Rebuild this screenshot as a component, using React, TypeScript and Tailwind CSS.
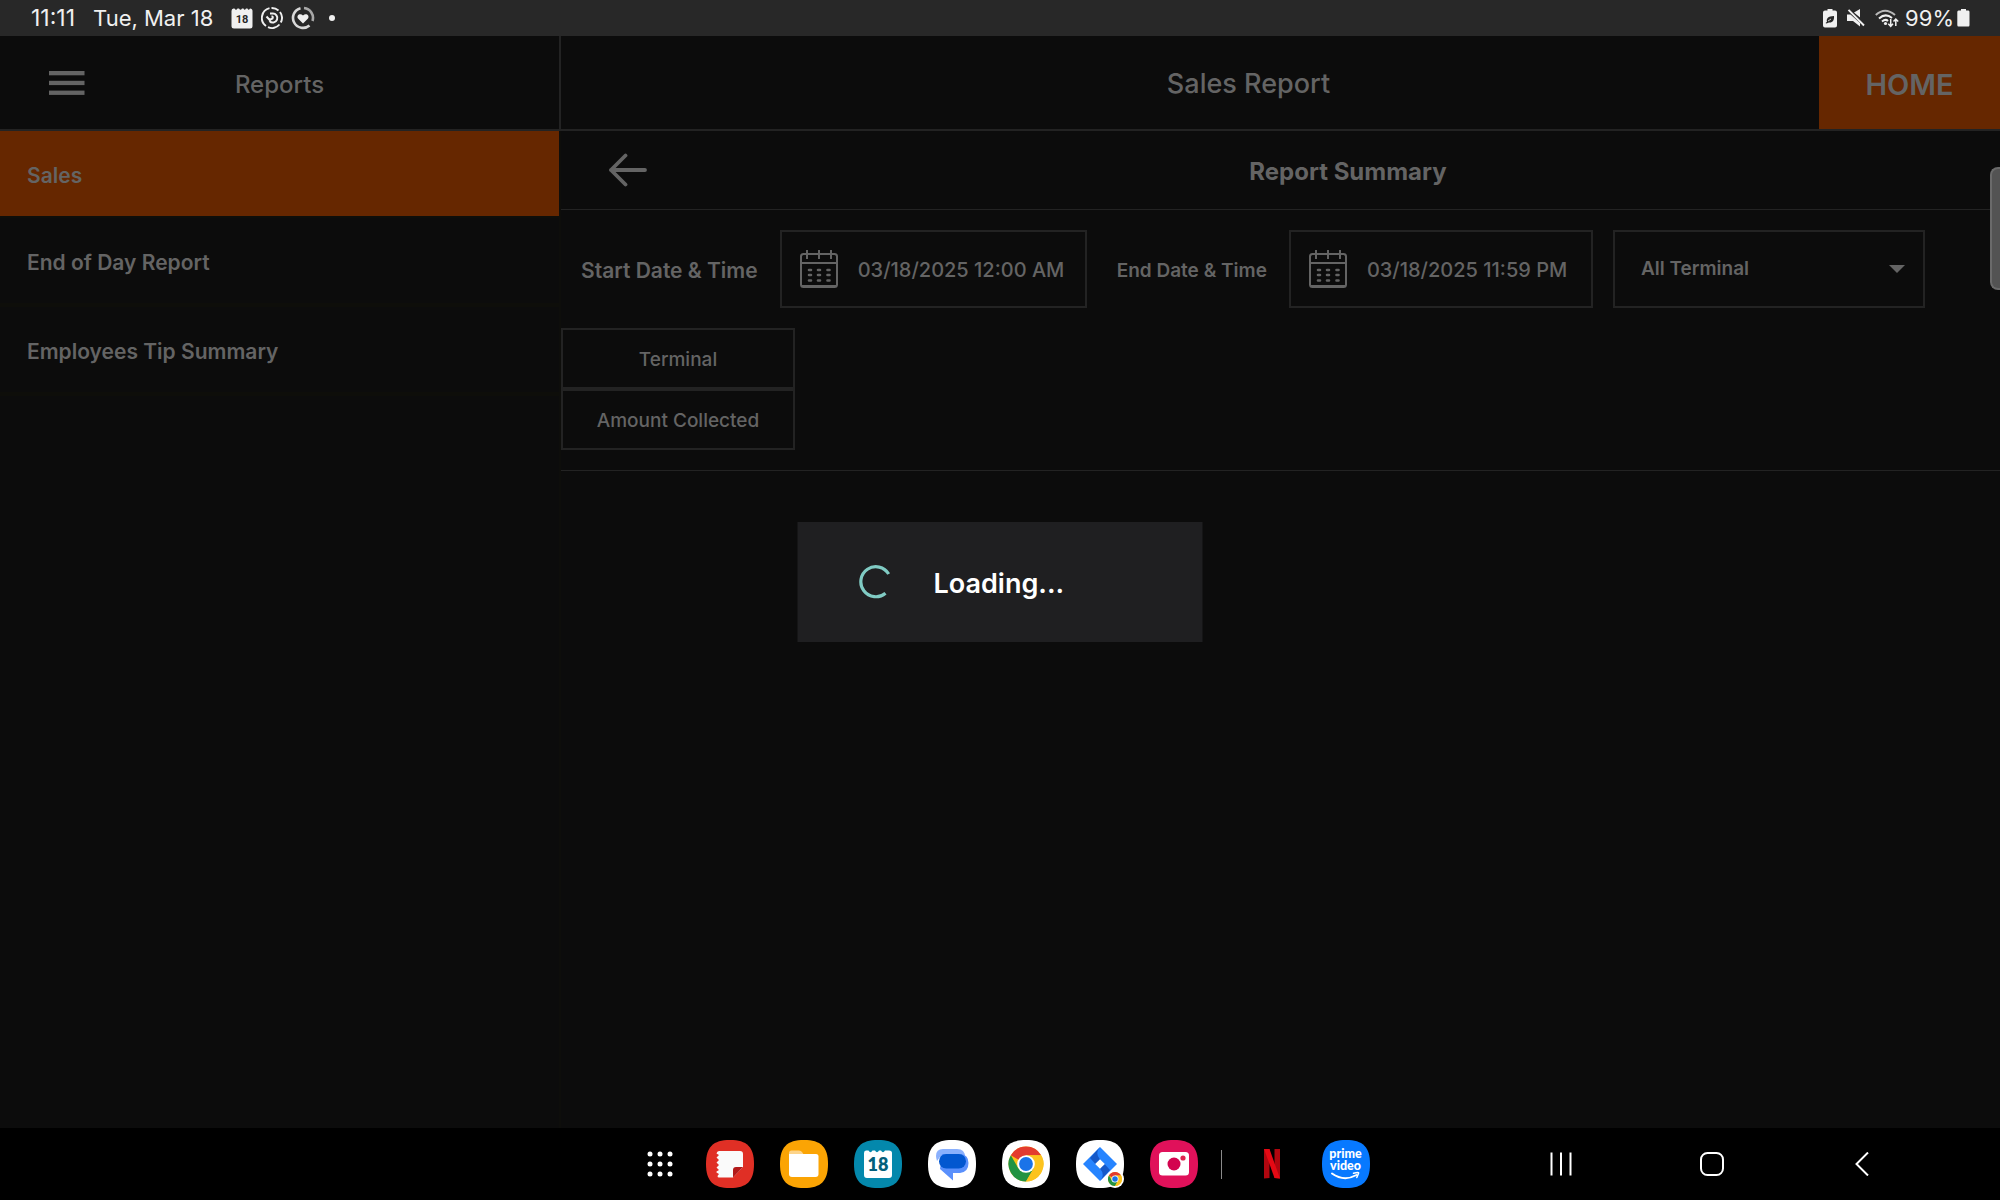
import React from "react";

const SQUIRCLE =
  "M24 0C41 0 48 7 48 24S41 48 24 48S0 41 0 24S7 0 24 0Z";

function HamburgerIcon() {
  return (
    <svg width="36" height="24" viewBox="0 0 36 24" fill="#646464" aria-hidden="true">
      <rect width="35.500" height="4.300" />
      <rect y="9.800" width="35.500" height="4.300" />
      <rect y="19.600" width="35.500" height="4.300" />
    </svg>
  );
}

function BackArrowIcon() {
  return (
    <svg width="40" height="34" viewBox="0 0 40 34" fill="none" stroke="#646464" strokeWidth="3.800" strokeLinecap="round" strokeLinejoin="round" aria-hidden="true">
      <path d="M36 17H2M16.500 2.500L2 17L16.500 31.500" />
    </svg>
  );
}

function CalendarIcon() {
  return (
    <svg className="shrink-0" width="38" height="38" viewBox="0 0 38 38" fill="none" stroke="#646464" strokeWidth="2" aria-hidden="true">
      <rect x="1" y="4" width="36" height="33" rx="2.500" />
      <path d="M1 13H37M1 36H37M7 0V9M19 0V9M31 0V9" />
      <g strokeWidth="2.600" strokeLinecap="round">
        <path d="M9 20h2M18 20h2M27.500 20h2M9 25h2M18 25h2M27.500 25h2M9 30.500h2M18 30.500h2M27.500 30.500h2" />
      </g>
    </svg>
  );
}

function StatusCalendarIcon() {
  return (
    <svg width="22" height="22" viewBox="0 0 22 22" aria-hidden="true">
      <path d="M2.500 1.500H3.500Q5 4 6.500 1.500H8Q9.500 4 11 1.500H12.500Q13.500 4 15 1.500H16.500Q17.500 4 19 1.500Q21.500 1.500 21.500 4V19Q21.500 21.500 19 21.500H3Q.5 21.500 .5 19V4Q.5 1.500 2.500 1.500Z" fill="#f0f0f0" />
      <text x="11" y="16" textAnchor="middle" fontFamily="Roboto, sans-serif" fontWeight="700" fontSize="11" fill="#282828">18</text>
    </svg>
  );
}

function SyncRingIcon() {
  return (
    <svg width="22" height="22" viewBox="0 0 22 22" fill="none" stroke="#f0f0f0" strokeWidth="1.900" aria-hidden="true">
      <path d="M8.500 1.200A10 10 0 0 0 5 19M7 20.200A10 10 0 0 0 18.500 17.500M19.800 15.500A10 10 0 0 0 19 5M17.500 3.500A10 10 0 0 0 10.500 1" />
      <path d="M9 6.500H11.500A4.500 4.500 0 1 1 8.500 14M5.500 9.500L8.700 13L11.500 11.500Q12.500 9.500 10.500 9.300" strokeWidth="2" />
    </svg>
  );
}

function HeartRingIcon() {
  return (
    <svg width="24" height="24" viewBox="0 0 24 24" fill="none" stroke="#d8d8d8" strokeWidth="2.600" aria-hidden="true">
      <path d="M9.500 2.200A10 10 0 1 0 18.500 19.500" />
      <path d="M13 2A10 10 0 0 1 21.500 15" stroke="#a8a8a8" />
      <path d="M12 17.500L7 12.500C5 9.500 9 6.500 12 9.500C15 6.500 19 9.500 17 12.500Z" fill="#f0f0f0" stroke="none" />
    </svg>
  );
}

function BatterySaverIcon() {
  return (
    <svg width="14" height="19" viewBox="0 0 14 19" aria-hidden="true">
      <path d="M4.500 0H9.500V1.500H12Q14 1.500 14 3.500V16.500Q14 18.500 12 18.500H2Q0 18.500 0 16.500V3.500Q0 1.500 2 1.500H4.500Z" fill="#f0f0f0" />
      <path d="M2.500 14L4 12.800C3 10 5 7 11 7C11.500 11 9.500 14 6 13.500L3.500 14.500ZM4.500 12.500L8 10" fill="#282828" />
      <path d="M5 12L8 10" stroke="#f0f0f0" strokeWidth=".8" />
    </svg>
  );
}

function MutedIcon() {
  return (
    <svg width="18" height="18" viewBox="0 0 18 18" aria-hidden="true">
      <path d="M0 5.500H3.500L13 14V17.500L6 12H0ZM7 3.500L13 0V8.500Z" fill="#f0f0f0" />
      <path d="M1.500 .8L17 16.500" stroke="#f0f0f0" strokeWidth="1.900" />
    </svg>
  );
}

function WifiIcon() {
  return (
    <svg width="24" height="19" viewBox="0 0 24 19" fill="none" stroke="#f0f0f0" strokeWidth="2" aria-hidden="true">
      <path d="M.8 6Q10 -2.500 20 6" stroke="#b8b8b8" />
      <path d="M4 9.500Q10.500 3.500 17 9" />
      <path d="M7 12.500Q10.500 9.500 13 12" />
      <circle cx="10.500" cy="14.500" r="1.600" fill="#f0f0f0" stroke="none" />
      <path d="M15.700 10V17M13.300 14.800L15.700 17.300L18 14.800M20.800 17V10M18.500 12.500L20.800 10L23.200 12.500" strokeWidth="1.500" />
    </svg>
  );
}

function BatteryIcon() {
  return (
    <svg width="13" height="18" viewBox="0 0 13 18" fill="#f0f0f0" aria-hidden="true">
      <path d="M4 0H9V1.500H11.500Q12.500 1.500 12.500 3V16Q12.500 17.500 11.500 17.500H1.500Q.3 17.500 .3 16V3Q.3 1.500 1.500 1.500H4Z" />
    </svg>
  );
}

function ChromeMark() {
  return (
    <g>
      <circle cx="24" cy="24" r="17.500" fill="#fbc116" />
      <path d="M24 24L8.840 15.250A17.500 17.500 0 0 1 39.160 15.250H24Z" fill="#e33b2e" />
      <path d="M8.840 15.250A17.500 17.500 0 0 0 24 41.500L31.600 28.400L16.400 28.400Z" fill="#229342" />
      <path d="M24 15.250H39.160A17.500 17.500 0 0 1 24 41.500L31.600 28.400Z" fill="#fcc31e" />
      <circle cx="24" cy="24" r="8.800" fill="#fff" />
      <circle cx="24" cy="24" r="6.900" fill="#1a73e8" />
    </g>
  );
}

function AppIcon({ children, fill }: { children: React.ReactNode; fill: string }) {
  return (
    <svg width="48" height="48" viewBox="0 0 48 48" aria-hidden="true">
      <path d={SQUIRCLE} fill={fill} />
      {children}
    </svg>
  );
}

function AppsGridIcon() {
  const dots = [3, 13, 23];
  return (
    <svg width="26" height="26" viewBox="0 0 26 26" fill="#fff" aria-hidden="true">
      {dots.map((y) => dots.map((x) => <circle key={`${x}-${y}`} cx={x} cy={y} r="2.500" />))}
    </svg>
  );
}

function NotesIcon() {
  return (
    <AppIcon fill="#e02f25">
      <path d="M13 11H34Q37 11 37 14V27L27 37.500H13Q11.500 37.500 11.500 36L13 34L10.500 32.500V31.500L13 30L10.500 27.500L13 25L10.500 22.500L13 20L10.500 17.500L13 15L10.500 13.500Q11 11 13 11Z" fill="#fafafa" />
      <path d="M27 37.500V30Q27 27 30 27H37Z" fill="#b21a1a" />
    </AppIcon>
  );
}

function FilesIcon() {
  return (
    <AppIcon fill="#fba404">
      <path d="M9 13Q9 10.500 11.500 10.500H19Q21 10.500 22 12L24 15H9Z" fill="#fdd48a" />
      <path d="M9 14H36Q38.500 14 38.500 16.500V34Q38.500 37 35.500 37H12Q9 37 9 34Z" fill="#fff" />
    </AppIcon>
  );
}

function CalendarAppIcon() {
  return (
    <AppIcon fill="#0488ac">
      <path d="M12 10.500H14.500Q16.500 14 18.500 10.500H21Q23 14 25 10.500H27Q29 14 31 10.500H35Q38 10.500 38 13V35Q38 38 35 38H13Q10 38 10 35V13Q10 10.500 12 10.500Z" fill="#fff" />
      <text x="24" y="31" textAnchor="middle" fontFamily="Lato, sans-serif" fontWeight="800" fontSize="18" fill="#045f7c">18</text>
    </AppIcon>
  );
}

function MessagesIcon() {
  return (
    <AppIcon fill="#fff">
      <path d="M15 9H29Q37 9 37 17H12L9 21Q8 18 8 16Q8 9 15 9Z" fill="#8ab0fd" />
      <path d="M14 14H33Q40.500 15 40.500 23Q40.500 32 32 33H25V40.500L12 29Z" fill="#5a90fc" />
      <rect x="11" y="14" width="27" height="14.500" rx="7.250" fill="#0257d0" />
    </AppIcon>
  );
}

function ChromeIcon() {
  return (
    <AppIcon fill="#fff">
      <ChromeMark />
    </AppIcon>
  );
}

function JiraIcon() {
  return (
    <AppIcon fill="#fff">
      <path d="M24 7L41 24L24 41L7 24Z" fill="#2684ff" />
      <path d="M24 7Q18.500 13 24 19.500L19.500 24L14 18Z" fill="#1558c8" />
      <path d="M24 41Q29.500 35 24 28.500L28.500 24L34 30Z" fill="#1558c8" />
      <path d="M24 19.200L28.800 24L24 28.800L19.200 24Z" fill="#fff" />
      <circle cx="39" cy="39" r="9" fill="#fff" />
      <g transform="translate(29.400 29.400) scale(.4)">
        <ChromeMark />
      </g>
    </AppIcon>
  );
}

function CameraIcon() {
  return (
    <AppIcon fill="#e0115a">
      <rect x="9" y="12" width="30" height="23.500" rx="3.500" fill="#fff" />
      <circle cx="24" cy="24" r="6.500" fill="#d3044f" />
      <circle cx="33" cy="18" r="2.600" fill="#e0234f" />
    </AppIcon>
  );
}

function NetflixIcon() {
  return (
    <svg width="48" height="48" viewBox="0 0 48 48" aria-hidden="true">
      <path d="M16 9H21.500V38L16 38.500ZM26.500 9H32V38.500L26.500 38Z" fill="#b1060f" />
      <path d="M16 9H21.500L32 38.500L26.500 38Z" fill="#e50914" />
    </svg>
  );
}

function PrimeVideoIcon() {
  return (
    <AppIcon fill="#0779ff">
      <g fontFamily="Lato, sans-serif" fontWeight="900" fontSize="12.500" fill="#fff" textAnchor="middle">
        <text x="23.500" y="18">prime</text>
        <text x="23.500" y="30">video</text>
      </g>
      <path d="M10 33.500Q22 42 34.500 35" fill="none" stroke="#fff" strokeWidth="2" strokeLinecap="round" />
      <path d="M31.500 33.300Q37.500 31.500 36.500 33.500L34.800 37.500" fill="none" stroke="#fff" strokeWidth="1.500" strokeLinecap="round" />
    </AppIcon>
  );
}

function RecentsIcon() {
  return (
    <svg width="22" height="24" viewBox="0 0 22 24" stroke="#fff" strokeWidth="2" aria-hidden="true">
      <path d="M1.500 .5V23.500M11 .5V23.500M20.500 .5V23.500" />
    </svg>
  );
}

function HomeIcon() {
  return (
    <svg width="24" height="24" viewBox="0 0 24 24" fill="none" stroke="#fff" strokeWidth="2" aria-hidden="true">
      <rect x="1" y="1" width="22" height="22" rx="6.500" />
    </svg>
  );
}

function NavBackIcon() {
  return (
    <svg width="20" height="24" viewBox="0 0 20 24" fill="none" stroke="#fff" strokeWidth="2" aria-hidden="true">
      <path d="M16 .5L4.500 12L16 23.500" />
    </svg>
  );
}

function StatusBar() {
  return (
    <div className="flex h-9 shrink-0 items-center justify-between bg-[#282828] pr-[30px] pl-[31px] text-[#f0f0f0]">
      <div className="flex items-center">
        <span className="text-[23px]">11:11</span>
        <span className="ml-[18px] text-[22px]">Tue, Mar 18</span>
        <span className="ml-[18px] flex items-center gap-2">
          <StatusCalendarIcon />
          <SyncRingIcon />
          <HeartRingIcon />
        </span>
        <span className="ml-3.5 size-1.5 rounded-full bg-[#f0f0f0]" />
      </div>
      <div className="flex items-center">
        <span className="mr-1.5 flex items-center gap-2.5">
          <BatterySaverIcon />
          <MutedIcon />
          <WifiIcon />
        </span>
        <span className="mr-[3px] text-[22px]">99%</span>
        <BatteryIcon />
      </div>
    </div>
  );
}

function Sidebar() {
  const row = "flex w-full items-center px-[27px] pt-1 text-left text-[21px] font-semibold";
  return (
    <aside className="flex w-[561px] shrink-0 flex-col">
      <div className="grid h-[95px] grid-cols-[1fr_auto_1fr] items-center border-r-2 border-b-2 border-[#232323] px-[49px]">
        <button type="button" aria-label="Menu" className="justify-self-start">
          <HamburgerIcon />
        </button>
        <h2 className="pt-1 text-[24px] font-medium">Reports</h2>
      </div>
      <nav className="flex flex-1 flex-col border-r-2 border-[#0e0e0b]">
        <button type="button" className={`${row} h-[85px] bg-[#662700]`}>Sales</button>
        <button type="button" className={`${row} h-[91px] border-t-2 border-b-4 border-[#0e0e0a]`}>End of Day Report</button>
        <button type="button" className={`${row} h-[89px] border-b-4 border-[#0e0e0a]`}>Employees Tip Summary</button>
      </nav>
    </aside>
  );
}

function DateField({ id, value, width }: { id: string; value: string; width: string }) {
  return (
    <div className={`flex h-[78px] shrink-0 items-center gap-5 border-2 border-[#232323] pl-[18px] ${width}`}>
      <CalendarIcon />
      <input id={id} type="text" readOnly defaultValue={value} className="w-full min-w-0 bg-transparent pt-0.5 text-[20px] font-medium outline-none" />
    </div>
  );
}

function ReportFilters() {
  return (
    <section className="border-b border-[#232323] py-5">
      <div className="flex items-center pl-5">
        <label htmlFor="start" className="mr-[22px] pt-1 text-[21px] font-semibold whitespace-nowrap">Start Date &amp; Time</label>
        <DateField id="start" value="03/18/2025 12:00 AM" width="w-[307px]" />
        <label htmlFor="end" className="mr-[22px] ml-[30px] pt-1 text-[19px] font-semibold whitespace-nowrap">End Date &amp; Time</label>
        <DateField id="end" value="03/18/2025 11:59 PM" width="w-[304px]" />
        <div className="relative ml-5">
          <select aria-label="Terminal filter" className="h-[78px] w-[312px] appearance-none border-2 border-[#232323] bg-transparent pl-[26px] text-[19px] font-semibold outline-none">
            <option>All Terminal</option>
          </select>
          <svg className="pointer-events-none absolute top-[35px] right-5" width="16" height="8" viewBox="0 0 16 8" fill="#646464" aria-hidden="true">
            <path d="M0 0H16L8 8Z" />
          </svg>
        </div>
      </div>
      <div className="mt-5 flex w-[234px] flex-col text-[19px] font-medium">
        <button type="button" className="h-[61px] border-2 border-[#232323] pt-1">Terminal</button>
        <button type="button" className="h-[61px] border-2 border-[#232323] pt-1">Amount Collected</button>
      </div>
    </section>
  );
}

function LoadingDialog() {
  return (
    <div role="dialog" aria-label="Loading" className="absolute top-[522px] left-1/2 flex h-[120px] w-[405px] -translate-x-1/2 items-center bg-[#1f1f21] pl-[61px]">
      <svg width="34" height="34" viewBox="0 0 34 34" fill="none" stroke="#80cbc4" strokeWidth="3.200" aria-hidden="true">
        <path d="M30.200 9A15 15 0 1 0 27 28.200" />
      </svg>
      <span className="ml-[41px] pt-1 text-[27px] font-semibold text-white">Loading...</span>
    </div>
  );
}

const apps = [
  { name: "Notes", Icon: NotesIcon },
  { name: "My Files", Icon: FilesIcon },
  { name: "Calendar", Icon: CalendarAppIcon },
  { name: "Messages", Icon: MessagesIcon },
  { name: "Chrome", Icon: ChromeIcon },
  { name: "Jira", Icon: JiraIcon },
  { name: "Camera", Icon: CameraIcon },
];

function Taskbar() {
  return (
    <footer className="grid h-[72px] shrink-0 grid-cols-[1fr_auto_1fr] items-center bg-black">
      <div />
      <div className="flex items-center pl-4">
        <button type="button" aria-label="All apps" className="mr-[33px]"><AppsGridIcon /></button>
        <div className="flex gap-[26px]">
          {apps.map(({ name, Icon }) => (
            <button key={name} type="button" aria-label={name}><Icon /></button>
          ))}
        </div>
        <span className="ml-[23px] h-[29px] w-px bg-[#8a8a8a]" />
        <button type="button" aria-label="Netflix" className="ml-[26px]"><NetflixIcon /></button>
        <button type="button" aria-label="Prime Video" className="ml-[26px]"><PrimeVideoIcon /></button>
      </div>
      <div className="flex items-center justify-end gap-32 pr-32">
        <button type="button" aria-label="Recents"><RecentsIcon /></button>
        <button type="button" aria-label="Home"><HomeIcon /></button>
        <button type="button" aria-label="Back"><NavBackIcon /></button>
      </div>
    </footer>
  );
}

export default function App() {
  return (
    <div className="relative flex min-h-screen flex-col overflow-hidden bg-[#0c0c0c] font-['Inter',sans-serif] text-[#646464]">
      <StatusBar />
      <div className="flex flex-1">
        <Sidebar />
        <main className="flex min-w-0 flex-1 flex-col">
          <header className="flex h-[95px] border-b-2 border-[#232323]">
            <h1 className="flex flex-1 items-center justify-center pt-1 pl-[117px] text-[27px] font-medium">Sales Report</h1>
            <button type="button" className="w-[181px] bg-[#662700] pt-1 text-[29px] font-semibold">HOME</button>
          </header>
          <div className="flex h-[79px] items-center border-b border-[#232323]">
            <button type="button" aria-label="Back" className="flex w-[135px] justify-center"><BackArrowIcon /></button>
            <h2 className="flex-1 pt-1 text-center text-[24px] font-bold">Report Summary</h2>
          </div>
          <ReportFilters />
        </main>
      </div>
      <Taskbar />
      <LoadingDialog />
      <div className="absolute top-[167px] right-0 h-[123px] w-2.5 rounded-l-lg border-2 border-r-0 border-[#6a6a6a] bg-[#535353]" />
    </div>
  );
}
